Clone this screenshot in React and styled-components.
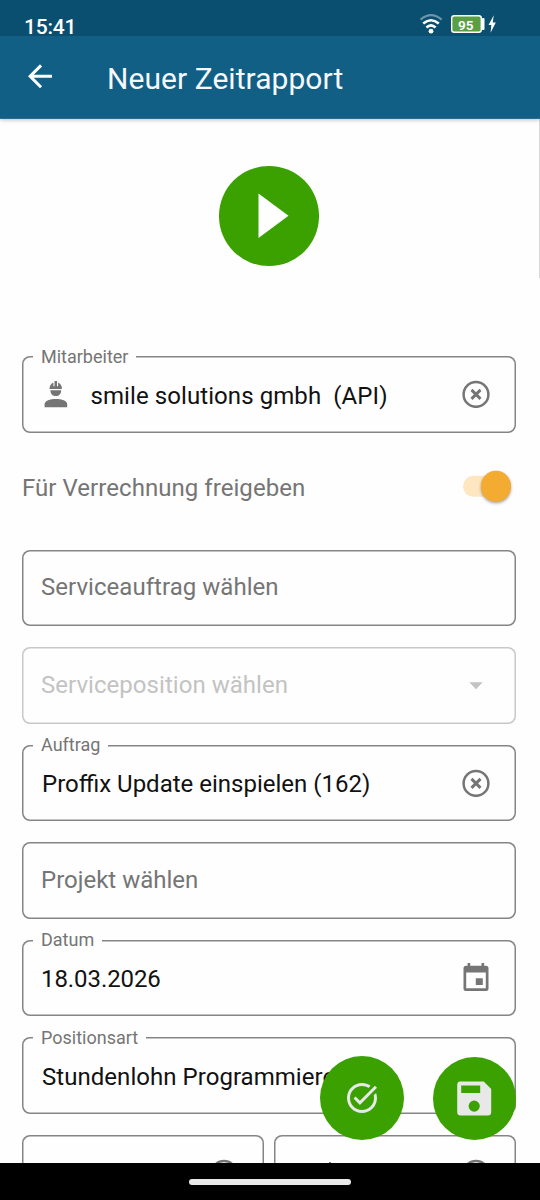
import React from "react";
import styled, { createGlobalStyle } from "styled-components";

const GlobalStyle = createGlobalStyle`
  * { box-sizing: border-box; }
  body { margin: 0; background: #fefefe; font-family: Roboto, "Noto Sans", sans-serif; }
`;

const Screen = styled.div`
  position: relative;
  width: 540px;
  height: 1200px;
  overflow: hidden;
  display: flex;
  flex-direction: column;
  background: #fefefe;
`;

const StatusBar = styled.header`
  flex: none;
  height: 36px;
  padding: 0 44px 0 24px;
  display: flex;
  justify-content: space-between;
  background: #0a4f70;
  color: #fff;
  z-index: 2;
`;

const Clock = styled.time`
  padding-top: 15px;
  font-size: 21px;
  line-height: 24px;
  font-weight: 500;
  letter-spacing: -0.2px;
`;

const StatusIcons = styled.div`
  display: flex;
  padding-top: 13px;
`;

const AppBar = styled.div`
  flex: none;
  height: 83px;
  padding-left: 22px;
  display: flex;
  background: #115f85;
  border-bottom: 1px solid #2c6d8f;
  box-shadow: 0 1px 4px rgba(0, 0, 0, 0.25);
  z-index: 1;
`;

const BackIcon = styled.svg`
  margin-top: 22px;
  flex: none;
`;

const Title = styled.h1`
  margin: 25px 0 0 49px;
  font-size: 30px;
  line-height: 36px;
  font-weight: 400;
  letter-spacing: 0.05px;
  color: #f6f9fb;
  white-space: nowrap;
`;

const Form = styled.main`
  flex: 1;
  min-height: 0;
  overflow: hidden;
  padding: 47px 24.4px 0 22px;
  display: flex;
  flex-direction: column;
`;

const PlayButton = styled.button`
  flex: none;
  align-self: center;
  width: 99.5px;
  height: 99.5px;
  margin-bottom: 90.5px;
  padding: 0;
  border: 0;
  border-radius: 50%;
  background: #3aa100;
  svg { display: block; }
`;

const Field = styled.div`
  position: relative;
  flex: none;
  height: 76.5px;
  margin-bottom: 21px;
  padding: 0 25.6px 0 ${(p) => p.$indent || 19}px;
  display: flex;
  align-items: center;
  border-radius: 8px;
  box-shadow: inset 0 0 0 1.5px ${(p) => (p.$disabled ? "#c8c8c8" : "#858585")};
  color: ${(p) => (p.$disabled ? "#c3c3c3" : "#757575")};
`;

const Label = styled.span`
  position: absolute;
  left: 11px;
  top: -10.4px;
  padding: 0 8px;
  background: #fefefe;
  color: #757575;
  font-size: 18px;
  line-height: 22px;
  white-space: nowrap;
`;

const Value = styled.span`
  flex: 1;
  font-size: 24px;
  line-height: 28px;
  padding: ${(p) => (p.$filled ? "3px 0 0" : "0 0 0.6px")};
  letter-spacing: ${(p) => p.$spacing ?? 0.04}px;
  color: ${(p) => (p.$filled ? "#111" : "inherit")};
  white-space: pre;
`;

const Icon = styled.svg`
  flex: none;
  display: block;
`;

const SwitchRow = styled.div`
  flex: none;
  height: 32px;
  margin: 18px 4.2px 46px 0;
  display: flex;
  align-items: center;
  justify-content: space-between;
  color: #757575;
  font-size: 24px;
  letter-spacing: 0.05px;
`;

const Track = styled.span`
  width: 48.5px;
  height: 21px;
  border-radius: 11px;
  background: #fde6c0;
  display: flex;
  align-items: center;
  justify-content: flex-end;
  transform: translateY(-1.2px);
`;

const Thumb = styled.span`
  width: 30.5px;
  height: 30.5px;
  border-radius: 50%;
  background: #f4ab31;
  box-shadow: 0 1.5px 3px rgba(0, 0, 0, 0.35);
  flex: none;
`;

const Split = styled.div`
  display: grid;
  grid-template-columns: 1fr 1fr;
  gap: 10.5px;
`;

const LeadSlot = styled.span`
  width: 46.5px;
  flex: none;
`;

const ScrollThumb = styled.div`
  position: absolute;
  right: 0;
  top: 119px;
  width: 1px;
  height: 159px;
  background: #d8d8d8;
`;

const Fab = styled.button`
  position: absolute;
  left: ${(p) => p.$x}px;
  top: ${(p) => p.$y}px;
  width: ${(p) => p.$size}px;
  height: ${(p) => p.$size}px;
  padding: 0;
  border: 0;
  border-radius: 50%;
  background: #3aa100;
  display: flex;
  align-items: center;
  justify-content: center;
`;

const NavBar = styled.footer`
  flex: none;
  height: 37px;
  background: #000;
  display: flex;
  justify-content: center;
  padding-top: 16px;
  z-index: 1;
`;

const NavHandle = styled.span`
  width: 162px;
  height: 6px;
  border-radius: 3px;
  background: #e8e8e8;
`;

const ClearIcon = () => (
  <Icon width="28" height="28" viewBox="0 0 28 28" fill="none" stroke="#757575">
    <circle cx="14" cy="14.400" r="12.400" strokeWidth="2.500" />
    <path d="M9.500 9.900l9 9M18.500 9.900l-9 9" strokeWidth="2.900" />
  </Icon>
);

const WorkerIcon = () => (
  <Icon width="24" height="28" viewBox="0 0 24 28" fill="#757575">
    <path d="M5.500 9C5.500 6 7 3.500 9.400 2.500V6.200H10.500V1H13V6.200H14.100V2.500C16.500 3.500 18 6 18 9Z" />
    <path d="M6.400 10.200H17.200C17.200 13.800 14.900 16 11.800 16S6.400 13.800 6.400 10.200Z" />
    <path d="M0.600 27.200V24.300C0.600 20.900 6 19.100 11.900 19.100S23.200 20.900 23.200 24.300V27.200Z" />
  </Icon>
);

const CalendarIcon = () => (
  <Icon width="28" height="30" viewBox="0 1.200 28 30">
    <path
      fill="#757575"
      fillRule="evenodd"
      d="M4 4H24Q26.500 4 26.500 6.500V26.700Q26.500 29.200 24 29.200H4Q1.500 29.200 1.500 26.700V6.500Q1.500 4 4 4ZM4.200 10.600V26.500H23.800V10.600Z"
    />
    <path d="M5.600 1.200H8.200V5H5.600ZM19.500 1.200H22.100V5H19.500ZM13.800 16.500H20.800V23.300H13.800Z" fill="#757575" />
  </Icon>
);

const DropdownIcon = () => (
  <Icon width="28" height="28">
    <path d="M7.300 11.300H20.700L14 18.300Z" fill="#c3c3c3" />
  </Icon>
);

const TickIcon = () => (
  <Icon width="4" height="24">
    <path d="M2 1V23" stroke="#757575" strokeWidth="2" />
  </Icon>
);

function SelectField({ label, text, filled, disabled, icon, lead, indent, spacing }) {
  return (
    <Field $disabled={disabled} $indent={indent}>
      {label && <Label>{label}</Label>}
      {lead}
      <Value $filled={filled} $spacing={spacing}>{text}</Value>
      {icon}
    </Field>
  );
}

export default function App() {
  return (
    <Screen>
      <GlobalStyle />
      <StatusBar>
        <Clock>15:41</Clock>
        <StatusIcons>
          <svg width="76" height="22" viewBox="420 13 76 22">
            <g fill="none" stroke="#fff" strokeWidth="2.200">
              <path d="M420.500 19.700Q431 10.700 441.700 19.700" stroke="#6c96ab" />
              <path d="M423.200 23.600Q431 16.900 438.800 23.600" strokeWidth="2.600" />
              <path d="M426.400 27.500Q431 23.300 435.600 27.500" strokeWidth="2.600" />
            </g>
            <circle cx="431" cy="31.200" r="2.400" fill="#fff" />
            <rect x="451.700" y="15.700" width="29.600" height="16.600" rx="2.500" fill="#5b9f45" stroke="#fff" strokeWidth="1.400" />
            <rect x="482" y="18" width="2.500" height="12" rx="0.800" fill="#fff" />
            <text x="465.800" y="30" textAnchor="middle" fontSize="13.500" fontWeight="600" fill="#fff">95</text>
            <path d="M493.800 15.300L488.500 25H491.300L490.600 32.700L495.800 22.500H492.700Z" fill="#fff" />
          </svg>
        </StatusIcons>
      </StatusBar>
      <AppBar>
        <BackIcon width="36" height="36" viewBox="0 -0.200 24 24" fill="#fff">
          <path d="M20 11H7.830l5.590-5.590L12 4l-8 8 8 8 1.410-1.410L7.830 13H20z" />
        </BackIcon>
        <Title>Neuer Zeitrapport</Title>
      </AppBar>
      <Form>
        <PlayButton aria-label="Start">
          <svg width="100" height="100"><path d="M39.500 27.500V72L69.500 49.700Z" fill="#fff" /></svg>
        </PlayButton>
        <SelectField label="Mitarbeiter" text="smile solutions gmbh  (API)" filled indent={22} spacing={0.08} lead={<LeadSlot><WorkerIcon /></LeadSlot>} icon={<ClearIcon />} />
        <SwitchRow>
          <span>Für Verrechnung freigeben</span>
          <Track><Thumb /></Track>
        </SwitchRow>
        <SelectField text="Serviceauftrag wählen" />
        <SelectField text="Serviceposition wählen" disabled icon={<DropdownIcon />} />
        <SelectField label="Auftrag" text="Proffix Update einspielen (162)" filled indent={20} spacing={0} icon={<ClearIcon />} />
        <SelectField text="Projekt wählen" spacing={0} />
        <SelectField label="Datum" text="18.03.2026" filled spacing={-0.08} icon={<CalendarIcon />} />
        <SelectField label="Positionsart" text="Stundenlohn Programmierer" filled indent={20} />
        <Split>
          <SelectField icon={<ClearIcon />} />
          <SelectField indent={54} lead={<TickIcon />} icon={<ClearIcon />} />
        </Split>
      </Form>
      <ScrollThumb />
      <Fab $x={320} $y={1056.4} $size={84} aria-label="Abschliessen">
        <svg width="36" height="36" viewBox="0 0 24 24" fill="#e8e8e8">
          <path d="M22 5.180L10.590 16.600l-4.240-4.240 1.410-1.410 2.830 2.830 10-10L22 5.180zm-2.210 5.040c.13.57.21 1.170.21 1.780 0 4.420-3.580 8-8 8s-8-3.580-8-8 3.580-8 8-8c1.580 0 3.040.46 4.280 1.250l1.440-1.440C16.100 2.670 14.130 2 12 2 6.480 2 2 6.480 2 12s4.480 10 10 10 10-4.480 10-10c0-1.190-.22-2.330-.6-3.390l-1.610 1.610z" />
        </svg>
      </Fab>
      <Fab $x={433} $y={1057} $size={83} aria-label="Speichern">
        <svg width="36" height="36" viewBox="0.800 0.500 36 36">
          <path fillRule="evenodd" fill="#e8e8e8" d="M4 1H27.500L35 8.500V31.500Q35 35 31.500 35H4.500Q1 35 1 31.500V4.500Q1 1 4 1ZM5 5V12.500H24V5ZM18 20A5.600 5.600 0 1 0 18 31.200A5.600 5.600 0 1 0 18 20Z" />
        </svg>
      </Fab>
      <NavBar><NavHandle /></NavBar>
    </Screen>
  );
}
